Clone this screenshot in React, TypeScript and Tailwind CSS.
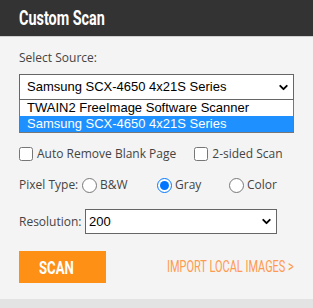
import React from "react";
import { ChevronDown } from "lucide-react";

const label = "font-['Open_Sans',sans-serif] text-[12px] text-[#444]";
const narrow = "font-['Roboto',sans-serif] inline-block origin-left";

export default function App() {
    return (
        <div className="w-[313px] h-[308px] bg-[#f4f4f4] flex flex-col overflow-hidden">
            <div className="h-[37px] bg-[#333333] border-b border-[#cfcfcf] px-[19px] flex items-center shrink-0">
                <h1 className={`${narrow} font-bold text-white text-[20px] leading-none scale-x-[0.72]`}>Custom Scan</h1>
            </div>

            <div className="flex-1 px-[19px]">
                <p className={`${label} mt-[12px] leading-[18px]`}>Select Source:</p>

                <div className="mt-[7px] w-[275px]">
                    <div className="h-[26px] bg-white border border-[#666] flex items-center justify-between pl-[7px] pr-[3px]">
                        <span className="font-['Liberation_Sans',sans-serif] text-[13px] text-black">Samsung SCX-4650 4x21S Series</span>
                        <ChevronDown size={13} strokeWidth={3.5} className="text-black" />
                    </div>
                    <div className="bg-white border border-t-0 border-[#777] font-['Liberation_Sans',sans-serif] text-[13px] leading-[16px]">
                        <div className="px-[7px] text-black">TWAIN2 FreeImage Software Scanner</div>
                        <div className="px-[7px] bg-[#1e90ff] text-white">Samsung SCX-4650 4x21S Series</div>
                    </div>
                </div>

                <div className={`${label} mt-[13px] flex items-center h-[16px]`}>
                    <label className="flex items-center gap-[4px]">
                        <input type="checkbox" className="w-[14px] h-[14px]" />
                        Auto Remove Blank Page
                    </label>
                    <label className="flex items-center gap-[4px] ml-[18px]">
                        <input type="checkbox" className="w-[14px] h-[14px]" />
                        2-sided Scan
                    </label>
                </div>

                <div className={`${label} mt-[15px] flex items-center h-[16px]`}>
                    <span className="w-[63px]">Pixel Type:</span>
                    <label className="flex items-center gap-[3px] w-[75px]">
                        <input type="radio" name="px" className="w-[15px] h-[15px]" />
                        B&amp;W
                    </label>
                    <label className="flex items-center gap-[3px] w-[72px]">
                        <input type="radio" name="px" defaultChecked className="w-[15px] h-[15px]" />
                        Gray
                    </label>
                    <label className="flex items-center gap-[3px]">
                        <input type="radio" name="px" className="w-[15px] h-[15px]" />
                        Color
                    </label>
                </div>

                <div className="mt-[16px] flex items-center">
                    <span className={`${label} w-[66px]`}>Resolution:</span>
                    <div className="w-[192px] h-[25px] bg-white border border-[#666] flex items-center justify-between pl-[3px] pr-[3px]">
                        <span className="font-['Liberation_Sans',sans-serif] text-[13px] text-black">200</span>
                        <ChevronDown size={13} strokeWidth={3.5} className="text-black" />
                    </div>
                </div>

                <div className="mt-[17px] flex items-center justify-between">
                    <button className="w-[87px] h-[32px] bg-[#ff9016] text-white flex items-center justify-center">
                        <span className={`${narrow} font-bold text-[18px] origin-center scale-x-[0.73]`}>SCAN</span>
                    </button>
                    <div className="w-[127px] overflow-visible">
                        <span className={`${narrow} text-[17px] text-[#ff9a4f] whitespace-nowrap scale-x-[0.645]`}>IMPORT LOCAL IMAGES &gt;</span>
                    </div>
                </div>
            </div>

            <div className="h-[9px] bg-[#e3e3e3] shrink-0" />
        </div>
    );
}
